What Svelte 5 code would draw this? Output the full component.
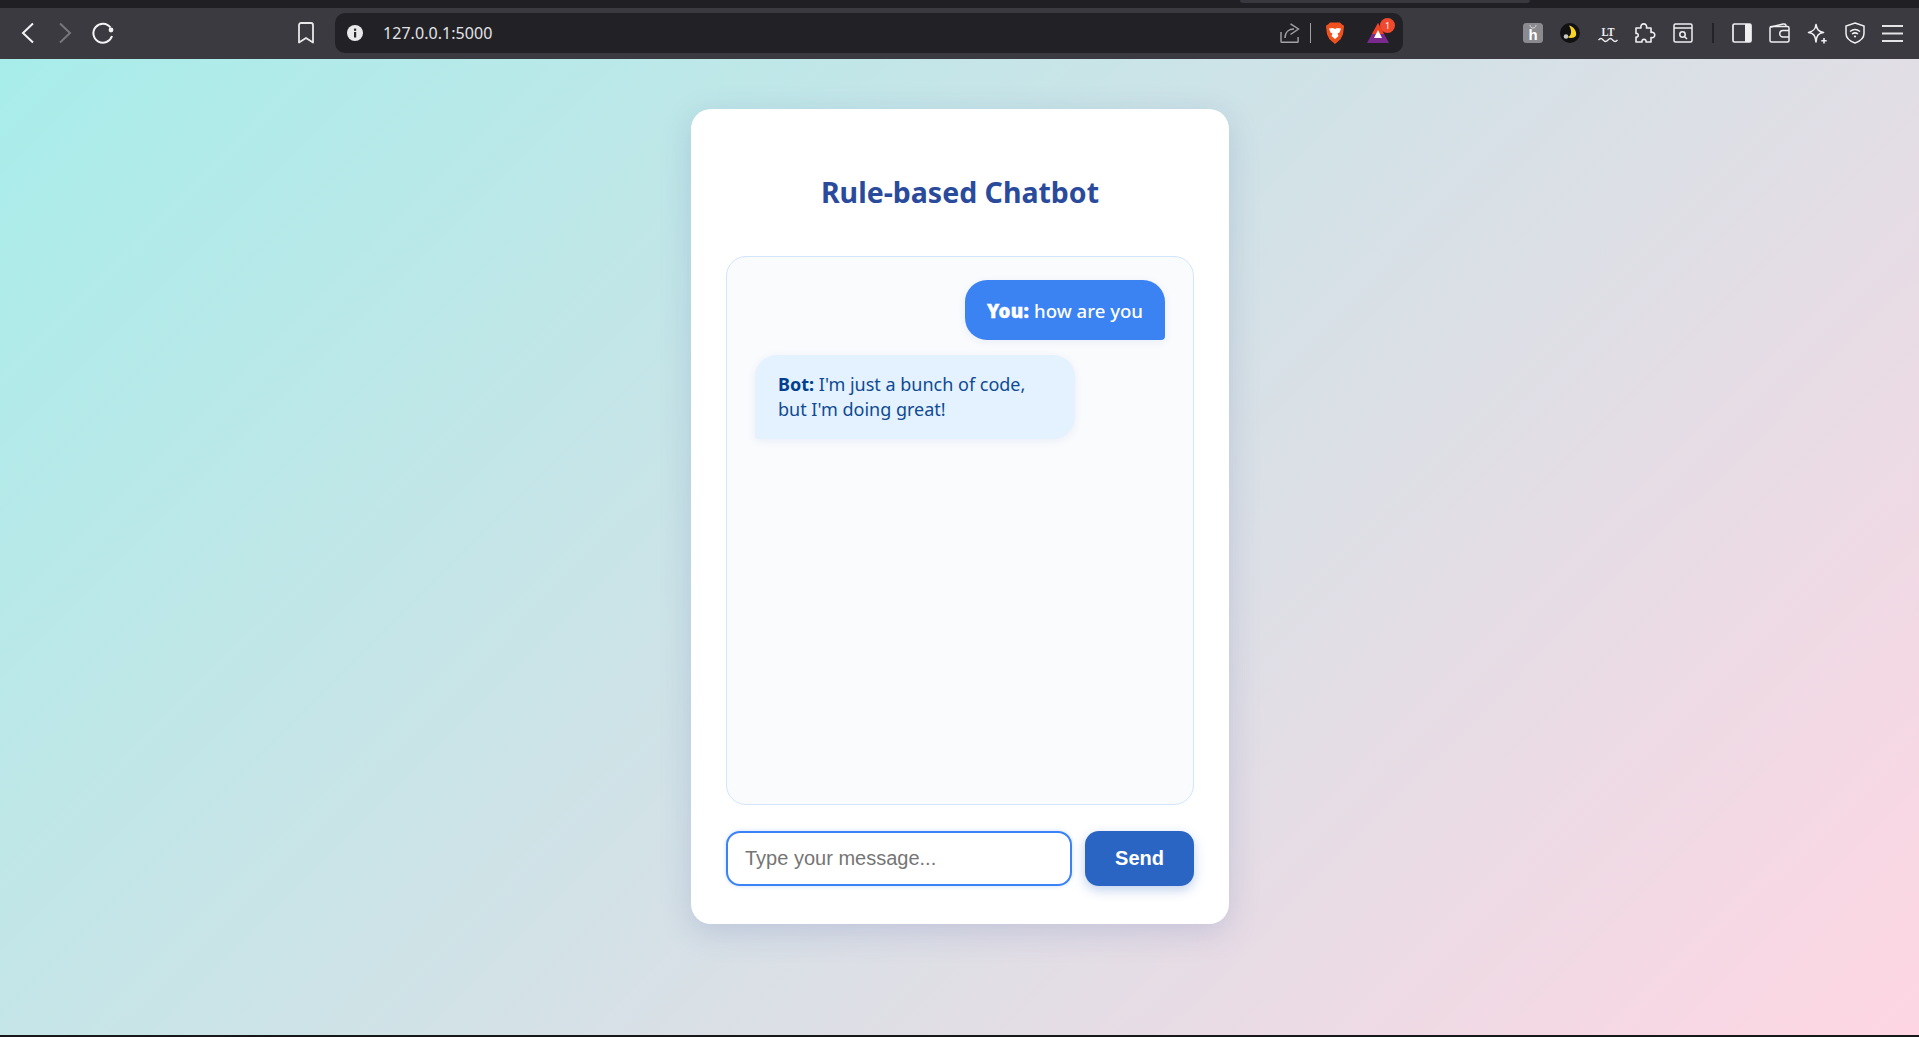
<script>
  let message = $state('');
  const messages = [
    { from: 'user', who: 'You:', text: 'how are you' },
    { from: 'bot', who: 'Bot:', text: "I'm just a bunch of code, but I'm doing great!" }
  ];
</script>

<div class="window">
  <div class="tabstrip"><span class="tab"></span></div>

  <header class="toolbar">
    <span class="slot">
      <svg width="24" height="24" viewBox="0 0 24 24" fill="none" stroke="#f4f4f6" stroke-width="2"><path d="M17 2.500 7 12l10 9.500" /></svg>
    </span>
    <span class="slot">
      <svg width="24" height="24" viewBox="0 0 24 24" fill="none" stroke="#77777c" stroke-width="2"><path d="m7 2.500 10 9.500-10 9.500" /></svg>
    </span>
    <span class="slot">
      <svg width="24" height="24" viewBox="0 0 24 24" fill="none" stroke="#f4f4f6" stroke-width="2"><path d="M19.500 6.500A9.500 9.500 0 1 0 21 15" /><circle cx="20" cy="9" r="2.400" fill="#f4f4f6" stroke="none" /></svg>
    </span>
    <span class="slot bookmark">
      <svg width="18" height="22" viewBox="0 0 18 22" fill="none" stroke="#e8e8ea" stroke-width="1.800"><path d="M2 20.500V3a2 2 0 0 1 2-2h10a2 2 0 0 1 2 2v17.500L9 16Z" stroke-linejoin="round" /></svg>
    </span>

    <div class="urlbar">
      <svg class="info" width="18" height="18" viewBox="0 0 18 18"><circle cx="9" cy="9" r="8" fill="#e9e9ec" /><rect x="8" y="8" width="2.200" height="5.500" fill="#28282c" /><rect x="8" y="4.600" width="2.200" height="2.200" fill="#28282c" /></svg>
      <span class="url">127.0.0.1:5000</span>
      <span class="spacer"></span>
      <svg width="20" height="20" viewBox="0 0 20 20" fill="none" stroke="#a4a4a8" stroke-width="1.400"><path d="M1 9v9.500c0 .5.300.8.800.8h15.500c.5 0 .8-.3.800-.8V14" /><path d="M5 15c0-6 4-9 9-9M10.500.8 18.500 6l-8 5.500" /></svg>
      <span class="urlsep"></span>
      <svg class="lion" width="20" height="22" viewBox="0 0 20 22"><path d="M5 .5h10l2 2 1.500.8.500 1-1 8-2.500 5L10 22l-5.500-4.700-2.500-5-1-8 .5-1L3 2.500Z" fill="#f0521f" /><path d="M4 6.500 8 6l2 1 2-1 4 .5-1.500 4-2 1 1 2.500L10 17l-3.500-3 1-2.500-2-1Z" fill="#fff" /></svg>
      <span class="bat">
        <svg width="22" height="20" viewBox="0 0 22 20"><path d="M11 0 22 20H0Z" fill="#7a2a8f" /><path d="M11 0 17 11H5Z" fill="#f0431f" /><path d="M11 7 15 15H7Z" fill="#fff" /></svg>
        <span class="badge">1</span>
      </span>
    </div>

    <div class="extensions">
      <span class="slot">
        <svg width="20" height="20" viewBox="0 0 20 20"><rect width="20" height="20" rx="3.500" fill="#8a8a8f" /><path d="M7 2c0 4 6 4 6 0" fill="none" stroke="#d8d8da" stroke-width="1" /><text x="10" y="16.500" text-anchor="middle" class="h-mark">h</text></svg>
      </span>
      <span class="slot">
        <svg width="20" height="20" viewBox="0 0 20 20"><circle cx="10" cy="10" r="10" fill="#111114" /><path d="M9 2.500c5 1 8 6 7 10-2 3-6 3-8.500 1.500C12 13 12 7 9 2.500Z" fill="#f7d322" /><circle cx="6" cy="13.500" r="2.300" fill="#c8c8c8" /></svg>
      </span>
      <span class="slot">
        <svg width="20" height="20" viewBox="0 0 20 20" fill="none" stroke="#f0f0f2" stroke-width="1.300"><text x="3.500" y="13" textLength="13" lengthAdjust="spacingAndGlyphs" class="lt-mark">LT</text><path d="M.5 17c2-2 3-2 4.700 0s3 2 4.800 0 3-2 4.700 0 3 2 4.800 0" /></svg>
      </span>
      <span class="slot">
        <svg width="21" height="20" viewBox="0 0 21 20" fill="none" stroke="#f0f0f2" stroke-width="1.600" stroke-linejoin="round"><path d="M1 5h5c-1.500-5.500 7-5.500 5.500 0H16v4.500c5-1.500 5 6.500 0 5V19h-5c1-3.500-5-3.500-4 0H1v-5c3 1 3-4.500 0-3.500Z" /></svg>
      </span>
      <span class="slot">
        <svg width="20" height="20" viewBox="0 0 20 20" fill="none" stroke="#f0f0f2" stroke-width="1.500"><rect x="1" y="1" width="18" height="18" rx="1.500" /><path d="M1 5h18" /><circle cx="9.500" cy="11.500" r="2.700" /><path d="m11.500 13.500 2.500 2.500" /></svg>
      </span>
      <span class="divider"></span>
      <span class="slot">
        <svg width="20" height="20" viewBox="0 0 20 20"><rect x="1" y="1" width="18" height="18" rx="1.500" fill="none" stroke="#f0f0f2" stroke-width="1.700" /><rect x="13" y="1" width="6" height="18" fill="#f0f0f2" /></svg>
      </span>
      <span class="slot">
        <svg width="21" height="20" viewBox="0 0 21 20" fill="none" stroke="#f0f0f2" stroke-width="1.500"><path d="M2 4 14 1c2-.3 3 .3 3 2" /><rect x="1" y="3.500" width="19" height="15.500" rx="1.500" /><path d="M20 7.500h-6a3 3 0 0 0 0 6.500h6" /></svg>
      </span>
      <span class="slot">
        <svg width="21" height="21" viewBox="0 0 21 21" fill="none" stroke="#f0f0f2" stroke-width="1.600" stroke-linejoin="round"><path d="M9 1.500c.8 5 2.500 7 7.500 8-5 .8-7 2.800-7.500 9.500-.6-6.700-2.500-8.700-7.500-9.500 5-1 6.800-3 7.500-8Z" /><path d="M17 15v5.500M14.300 17.800h5.400" /></svg>
      </span>
      <span class="slot">
        <svg width="20" height="22" viewBox="0 0 20 22" fill="none" stroke="#f0f0f2" stroke-width="1.500"><path d="M10 1 19 4v7.500c0 4.500-3.500 7.500-9 9.500-5.500-2-9-5-9-9.500V4Z" /><path d="M5 9.500c3-2.500 7-2.500 10 0M7 12c2-1.500 4-1.500 6 0" /><circle cx="10" cy="14.500" r="1.100" fill="#f0f0f2" stroke="none" /></svg>
      </span>
      <span class="slot">
        <svg width="21" height="17" viewBox="0 0 21 17" stroke="#e4e4e6" stroke-width="1.800"><path d="M0 1h21M0 8.500h21M0 16h21" /></svg>
      </span>
    </div>
  </header>

  <main class="page">
    <section class="card">
      <h2>Rule-based Chatbot</h2>

      <div class="chat">
        {#each messages as m}
          <div class="msg {m.from}"><b>{m.who}</b> {m.text}</div>
        {/each}
      </div>

      <form class="composer" onsubmit={(e) => e.preventDefault()}>
        <input type="text" placeholder="Type your message..." bind:value={message} />
        <button type="submit">Send</button>
      </form>
    </section>
  </main>

  <div class="edge"></div>
</div>

<style>
  :global(body) {
    margin: 0;
    overflow: hidden;
    font-family: "Noto Sans", "Open Sans", sans-serif;
  }
  .window {
    display: flex;
    flex-direction: column;
    height: 1037px;
  }
  .tabstrip {
    height: 8px;
    background: #1f1f24;
  }
  .tab {
    display: block;
    width: 290px;
    height: 3px;
    margin-left: 1240px;
    background: #38383e;
    border-radius: 0 0 6px 6px;
  }
  .toolbar {
    height: 51px;
    display: flex;
    align-items: center;
    padding-left: 9px;
    padding-bottom: 1px;
    background: #3a3a40;
    box-sizing: border-box;
  }
  .slot {
    flex: none;
    width: 37.500px;
    height: 40px;
    display: flex;
    align-items: center;
    justify-content: center;
  }
  .bookmark {
    margin-left: 166px;
    margin-right: 10px;
  }
  .urlbar {
    width: 1068px;
    height: 40px;
    flex: none;
    display: flex;
    align-items: center;
    padding: 0 14px 0 11px;
    box-sizing: border-box;
    background: #212126;
    border-radius: 10px;
  }
  .info {
    flex: none;
  }
  .url {
    margin: 0 0 1px 19px;
    color: #e3e3e6;
    font-size: 16px;
    line-height: 20px;
    letter-spacing: 0.05px;
  }
  .spacer {
    flex: 1;
  }
  .urlsep {
    width: 1px;
    height: 20px;
    margin: 0 14px 0 10px;
    background: #a0a0a4;
  }
  .lion {
    margin-right: 22px;
  }
  .bat {
    position: relative;
    display: flex;
  }
  .badge {
    position: absolute;
    top: -5px;
    right: -6px;
    width: 15px;
    height: 15px;
    border-radius: 50%;
    background: #f0492e;
    color: #fff;
    font-size: 9px;
    line-height: 15px;
    text-align: center;
  }
  .extensions {
    display: flex;
    align-items: center;
    margin-left: 111px;
  }
  .divider {
    width: 2px;
    height: 20px;
    margin: 0 10px;
    background: #232327;
  }
  .h-mark {
    fill: #fff;
    stroke: none;
    font-family: "Liberation Sans", sans-serif;
    font-size: 15px;
    font-weight: 700;
  }
  .lt-mark {
    fill: #f0f0f2;
    stroke: none;
    font-family: "Liberation Serif", serif;
    font-size: 12px;
    font-weight: 700;
  }
  .page {
    flex: 1;
    background: linear-gradient(135deg, #a8edea 0%, #fed6e3 100%);
    padding-top: 50px;
  }
  .card {
    width: 538px;
    height: 815px;
    margin-left: 691px;
    padding: 0 35px;
    box-sizing: border-box;
    background: #fff;
    border-radius: 20px;
    box-shadow: 0 8px 32px rgba(60, 80, 160, 0.18);
    display: flex;
    flex-direction: column;
  }
  h2 {
    margin: 0;
    height: 147px;
    line-height: 166px;
    text-align: center;
    font-size: 28.500px;
    font-weight: 700;
    color: #2a4b9b;
  }
  .chat {
    height: 549px;
    flex: none;
    padding: 23px 28px;
    box-sizing: border-box;
    display: flex;
    flex-direction: column;
    gap: 15px;
    background: #f9fbfd;
    border: 1px solid #d3e5fa;
    border-radius: 20px;
  }
  .msg {
    font-size: 18px;
    line-height: 25px;
    box-shadow: 0 2px 8px rgba(60, 80, 160, 0.08);
  }
  .user {
    align-self: flex-end;
    padding: 17.500px 22px;
    font-size: 18.600px;
    font-weight: 500;
    color: #fff;
    background: #3b82f3;
    border-radius: 22px 22px 4px 22px;
  }
  .user b {
    font-weight: 900;
    letter-spacing: 0.3px;
    -webkit-text-stroke: 0.4px #fff;
  }
  .bot {
    align-self: flex-start;
    width: 320px;
    box-sizing: border-box;
    padding: 17px 23px;
    color: #0f4a93;
    background: #e3f2fe;
    border-radius: 22px 22px 22px 4px;
  }
  .bot b {
    color: #003f8f;
    font-weight: 700;
  }
  .composer {
    display: flex;
    gap: 13px;
    margin-top: 26px;
  }
  input {
    flex: 1;
    min-width: 0;
    height: 55px;
    padding: 0 17px;
    box-sizing: border-box;
    border: 2px solid #3b82f6;
    border-radius: 14px;
    outline: none;
    font-family: "Liberation Sans", Arial, sans-serif;
    font-size: 20px;
    color: #222;
    box-shadow: 0 0 4px rgba(59, 130, 246, 0.25);
  }
  input::placeholder {
    color: #757575;
  }
  button {
    width: 109px;
    height: 55px;
    flex: none;
    border: none;
    border-radius: 14px;
    background: #2b65c4;
    color: #fff;
    font-family: "Liberation Sans", Arial, sans-serif;
    font-size: 20px;
    font-weight: 700;
    box-shadow: 0 4px 12px rgba(43, 101, 196, 0.3);
  }
  .edge {
    height: 2px;
    background: #16181a;
  }
</style>
